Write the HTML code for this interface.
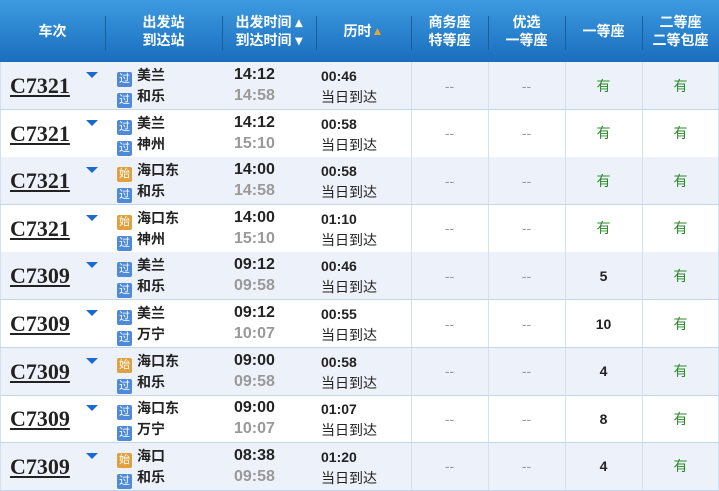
<!DOCTYPE html>
<html><head><meta charset="utf-8"><style>
*{margin:0;padding:0;box-sizing:border-box}
body{width:719px;height:489px;overflow:hidden;background:#fff;font-family:"Liberation Sans","Noto Sans CJK SC",sans-serif;position:relative}
.hd{position:absolute;left:0;top:0;width:719px;height:62px;background:linear-gradient(#3d9be0,#1a6dbd);color:#fff;font-weight:bold;font-size:14px}
.hc{position:absolute;top:0;height:62px;display:flex;align-items:center;justify-content:center;text-align:center;line-height:18px}
.sep{position:absolute;top:16px;width:1px;height:34px;background:#1a5e9f}
.row{position:absolute;left:0;width:719px;height:48px;border-bottom:1px solid #c4d6ea}
.odd{background:#edf2fa}
.vl{position:absolute;top:0;width:1px;height:100%;background:#d4e0ee}
.tn{position:absolute;left:10px;top:11px;font-family:"Liberation Serif",serif;font-weight:bold;font-size:22px;text-decoration:underline;color:#222}
.tri{position:absolute;left:86px;top:10px;width:0;height:0;border-left:6px solid transparent;border-right:6px solid transparent;border-top:6px solid #1a6ad0}
.st{position:absolute;left:117px;font-size:14px;color:#222;font-weight:bold;line-height:16px}
.ic{display:inline-block;width:15px;height:15px;border-radius:2px;color:#fff;font-size:11px;line-height:15px;text-align:center;vertical-align:-2px;margin-right:5px;font-weight:normal}
.g{background:#4f8ad8}.s{background:#e0a040}
.t{position:absolute;left:234px;font-size:16px;font-weight:bold;line-height:17px}
.d{position:absolute;left:321px;font-size:14px;line-height:16px;color:#222}
.c{position:absolute;top:0;height:47px;display:flex;align-items:center;justify-content:center;font-size:14px}
</style></head><body>
<div class="hd">
<div class="hc" style="left:0;width:105px">车次</div>
<div class="hc" style="left:105px;width:117px">出发站<br>到达站</div>
<div class="hc" style="left:222px;width:94px">出发时间 ▴<br>到达时间 ▾</div>
<div class="hc" style="left:316px;width:95px">历时 <span style="color:#f0a030;font-size:12px">▲</span></div>
<div class="hc" style="left:411px;width:77px">商务座<br>特等座</div>
<div class="hc" style="left:488px;width:77px">优选<br>一等座</div>
<div class="hc" style="left:565px;width:77px">一等座</div>
<div class="hc" style="left:642px;width:77px">二等座<br>二等包座</div>
<div class="sep" style="left:105px"></div><div class="sep" style="left:222px"></div><div class="sep" style="left:316px"></div><div class="sep" style="left:411px"></div><div class="sep" style="left:488px"></div><div class="sep" style="left:565px"></div><div class="sep" style="left:642px"></div>
</div>
<div id="rows"></div>
<script>
var d=[
["C7321","g","美兰","g","和乐","14:12","14:58","00:46","有"],
["C7321","g","美兰","g","神州","14:12","15:10","00:58","有"],
["C7321","s","海口东","g","和乐","14:00","14:58","00:58","有"],
["C7321","s","海口东","g","神州","14:00","15:10","01:10","有"],
["C7309","g","美兰","g","和乐","09:12","09:58","00:46","5"],
["C7309","g","美兰","g","万宁","09:12","10:07","00:55","10"],
["C7309","s","海口东","g","和乐","09:00","09:58","00:58","4"],
["C7309","g","海口东","g","万宁","09:00","10:07","01:07","8"],
["C7309","s","海口","g","和乐","08:38","09:58","01:20","4"]];
var h="";
d.forEach(function(r,i){
var top=62+i*47.6;
var ic=function(k){return '<span class="ic '+k+'">'+(k=="g"?"过":"始")+'</span>'};
var fc=/\d/.test(r[8])?'color:#222;font-weight:bold':'color:#2a8a2a';
h+='<div class="row'+(i%2==0?' odd':'')+'" style="top:'+top+'px">'+
'<div class="vl" style="left:411px"></div><div class="vl" style="left:488px"></div><div class="vl" style="left:565px"></div><div class="vl" style="left:642px"></div><div class="vl" style="left:718px"></div><div class="vl" style="left:0"></div>'+
'<div class="tn">'+r[0]+'</div><div class="tri"></div>'+
'<div class="st" style="top:5px">'+ic(r[1])+r[2]+'</div>'+
'<div class="st" style="top:26px">'+ic(r[3])+r[4]+'</div>'+
'<div class="t" style="top:4px;color:#222">'+r[5]+'</div>'+
'<div class="t" style="top:25px;color:#999">'+r[6]+'</div>'+
'<div class="d" style="top:6px;font-weight:bold">'+r[7]+'</div>'+
'<div class="d" style="top:27px">当日到达</div>'+
'<div class="c" style="left:411px;width:77px;color:#999">--</div>'+
'<div class="c" style="left:488px;width:77px;color:#999">--</div>'+
'<div class="c" style="left:565px;width:77px;'+fc+'">'+r[8]+'</div>'+
'<div class="c" style="left:642px;width:77px;color:#2a8a2a">有</div>'+
'</div>';});
document.getElementById("rows").innerHTML=h;
</script>
</body></html>
